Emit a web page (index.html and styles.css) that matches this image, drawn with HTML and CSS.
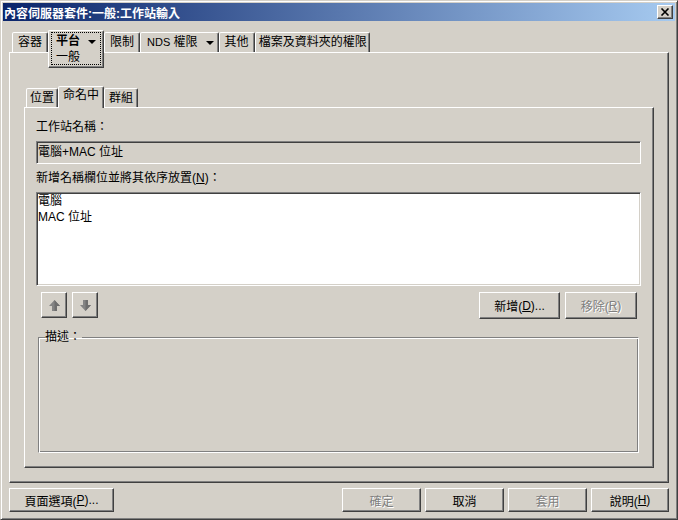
FILE: index.html
```html
<!doctype html>
<html lang="zh-Hant">
<head>
  <meta charset="utf-8" />
  <title>內容伺服器套件:一般:工作站輸入</title>
  <link rel="stylesheet" href="styles.css">
</head>
<body>
  <div class="window">
    <div class="titlebar">
      <span class="title">內容伺服器套件:一般:工作站輸入</span>
      <span class="close">
        <svg width="10" height="8" viewBox="0 0 10 8"><path d="M1.5 0.5l7 7M8.5 0.5l-7 7" stroke="#000" stroke-width="1.6" fill="none"/></svg>
      </span>
    </div>

    <div class="body">
      <div class="tabstrip outer-strip">
        <div class="tab">容器</div>
        <div class="tab menu">
          <div class="focus">
            <div class="menu-head"><b>平台</b><i class="caret"></i></div>
            <div class="menu-item">一般</div>
          </div>
        </div>
        <div class="tab">限制</div>
        <div class="tab nds"><span class="latin">NDS</span> 權限<i class="caret"></i></div>
        <div class="tab">其他</div>
        <div class="tab long">檔案及資料夾的權限</div>
      </div>

      <div class="panel outer-panel">
        <div class="tabstrip inner-strip">
          <div class="tab">位置</div>
          <div class="tab sel">命名中</div>
          <div class="tab">群組</div>
        </div>

        <div class="panel inner-panel">
          <div class="label">工作站名稱：</div>
          <div class="field sunken">電腦+MAC 位址</div>
          <div class="label">新增名稱欄位並將其依序放置(<u>N</u>)：</div>
          <div class="list sunken">
            <div class="item">電腦</div>
            <div class="item">MAC 位址</div>
          </div>
          <div class="btnrow">
            <button class="btn arrow-btn" disabled>
              <svg width="11" height="11" viewBox="0 0 11 11"><path d="M5.5 0L11 6H8v5H3V6H0z" fill="#848484"/><path d="M5.5 0L11 6H8v5H5.5z" fill="#6e6e6e"/></svg>
            </button>
            <button class="btn arrow-btn" disabled>
              <svg width="11" height="11" viewBox="0 0 11 11"><path d="M5.5 11L11 5H8V0H3v5H0z" fill="#848484"/><path d="M5.5 11L11 5H8V0H5.5z" fill="#6e6e6e"/></svg>
            </button>
            <button class="btn add-btn">新增(<u>D</u>)...</button>
            <button class="btn remove-btn" disabled>移除(<u>R</u>)</button>
          </div>
          <fieldset class="group">
            <legend>描述：</legend>
          </fieldset>
        </div>
      </div>

      <div class="footer">
        <button class="btn page-btn">頁面選項(<u>P</u>)...</button>
        <button class="btn ok-btn" disabled>確定</button>
        <button class="btn">取消</button>
        <button class="btn" disabled>套用</button>
        <button class="btn help-btn">說明(<u>H</u>)</button>
      </div>
    </div>
  </div>
</body>
</html>
```

FILE: styles.css
```css
:root { --face:#d4d0c8; --shadow:#808080; --dark:#404040; }
html, body { margin:0; height:100%; }
body {
  background:var(--face); color:#000;
  font-family:"Liberation Sans", "Noto Sans CJK TC", sans-serif;
  font-size:12px;
}

.window {
  width:678px; height:520px; box-sizing:border-box;
  display:flex; flex-direction:column;
  border:1px solid; border-color:var(--face) var(--dark) var(--dark) var(--face);
  box-shadow:inset 1px 1px #fff, inset -1px -1px var(--shadow);
  padding:2px;
}

/* title bar */
.titlebar {
  height:18px; flex:none; box-sizing:border-box;
  display:flex; align-items:center; justify-content:space-between;
  padding:0 2px 0 1px;
  background:linear-gradient(to right,#0a246a,#a6caf0);
  color:#fff; font-weight:bold; font-size:12px;
}
.close {
  width:16px; height:14px; box-sizing:border-box;
  display:flex; align-items:center; justify-content:center;
  background:var(--face);
  border:1px solid; border-color:#fff var(--dark) var(--dark) #fff;
  box-shadow:inset -1px -1px var(--shadow);
}
.close svg { display:block; }

.body {
  flex:1; display:flex; flex-direction:column;
  padding:9px 6px 5px 6px;
}

/* tabs */
.tabstrip { display:flex; align-items:flex-end; flex:none; }
.tab {
  background:var(--face);
  border:1px solid; border-bottom:0;
  border-color:#fff var(--dark) transparent #fff;
  border-radius:2px 2px 0 0;
  box-shadow:inset -1px 0 var(--shadow);
  box-sizing:border-box; white-space:nowrap;
}
.latin { font-size:11px; }
.outer-strip { height:22px; padding-left:3px; }
.outer-strip .tab { height:20px; line-height:19px; padding:0 5px; }
.outer-strip .tab.nds { padding:0 4px 0 6px; }
.outer-strip .tab.long { padding:0 2px 0 3px; }
.outer-strip .tab.menu {
  height:38px; margin-bottom:-16px;
  position:relative; z-index:2;
  border-bottom:1px solid var(--dark);
  box-shadow:inset -1px -1px var(--shadow);
  padding:1px 2px 2px 2px;
  line-height:normal;
}
.focus {
  width:50px; height:33px; box-sizing:border-box;
  border:1px dotted #000;
  padding-left:4px;
}
.menu-head { line-height:16px; height:16px; }
.menu-item { line-height:15px; margin-top:1px; }
.caret {
  display:inline-block; width:0; height:0;
  border-left:4px solid transparent; border-right:4px solid transparent;
  border-top:4px solid #000;
  vertical-align:middle; margin-left:8px;
}

.inner-strip { height:21px; padding-left:2px; }
.inner-strip .tab { height:19px; line-height:18px; padding:0 4px; }
.inner-strip .tab:first-child { padding:0 3px; }
.inner-strip .tab.sel {
  height:22px; margin-bottom:-1px;
  position:relative; z-index:1;
  padding:0 4px; line-height:17px;
}

/* panels */
.panel {
  background:var(--face);
  border:1px solid; border-color:#fff var(--dark) var(--dark) #fff;
  box-shadow:inset -1px -1px var(--shadow);
  box-sizing:border-box;
}
.outer-panel {
  height:431px; flex:none;
  display:flex; flex-direction:column;
  padding:33px 14px 14px 14px;
}
.inner-panel {
  height:361px; flex:none;
  display:flex; flex-direction:column;
  padding:12px 12px 14px 11px;
}

.label { line-height:14px; height:14px; white-space:nowrap; }
.sunken {
  border:1px solid; border-color:var(--shadow) #fff #fff var(--shadow);
  box-shadow:inset 1px 1px var(--dark), inset -1px -1px var(--face);
  box-sizing:border-box;
}
.field { height:23px; margin:7px 0; line-height:21px; padding-left:1px; }
.list {
  height:94px; margin-top:7px;
  background:#fff; padding:0 1px;
}
.item { line-height:16px; }

/* buttons */
.btn {
  font:inherit; color:#000; padding:0;
  background:var(--face);
  border:1px solid; border-color:#fff var(--dark) var(--dark) #fff;
  box-shadow:inset -1px -1px var(--shadow);
  box-sizing:border-box;
  display:flex; align-items:center; justify-content:center;
  white-space:nowrap;
}
.btn:disabled { color:var(--shadow); text-shadow:1px 1px #fff; }
.btnrow {
  display:flex; align-items:flex-start; gap:5px;
  height:27px; margin:6px 4px 0 5px; flex:none;
}
.arrow-btn { width:26px; height:26px; }
.add-btn { width:81px; height:27px; margin-left:auto; }
.remove-btn { width:72px; height:27px; }

.group {
  margin:11px 2px 0 2px; padding:0;
  height:123px; box-sizing:border-box; min-width:0;
  border:1px solid; border-color:var(--shadow) #fff #fff var(--shadow);
  box-shadow:inset 1px 1px #fff, inset -1px -1px var(--shadow);
}
.group legend {
  margin-left:6px; padding:0 1px 0 0;
  line-height:14px;
}

.footer {
  display:flex; gap:4px; height:24px; margin-top:5px; flex:none;
}
.footer .btn { width:79px; height:24px; }
.footer .page-btn { width:105px; margin-right:auto; }
.footer .help-btn { width:78px; }
```
